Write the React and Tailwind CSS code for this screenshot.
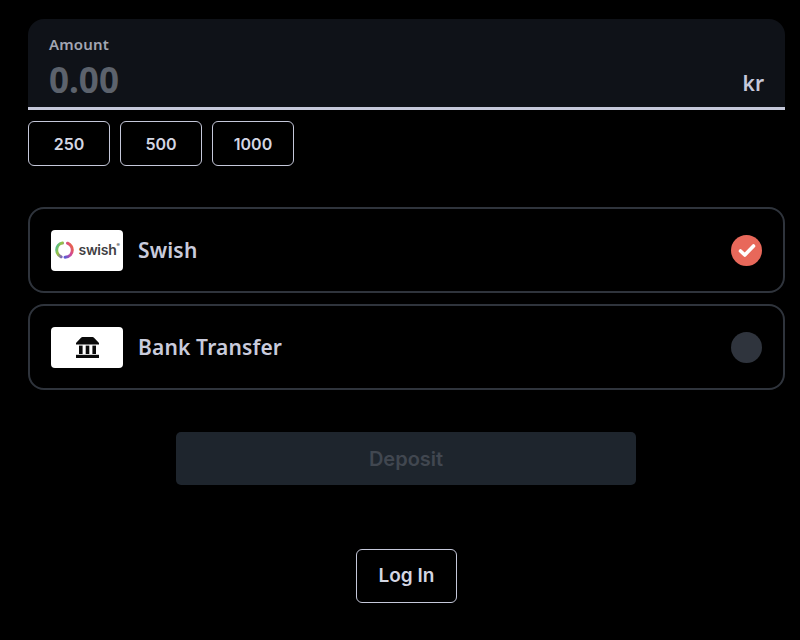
import React from "react";

const amounts = ["250", "500", "1000"];

function SwishLogo() {
  return (
    <div className="flex items-center gap-[5px]">
      <svg width="19" height="22" viewBox="0 0 19 22" fill="none">
        <defs>
          <linearGradient id="swishA" x1="0" y1="0" x2="1" y2="1">
            <stop offset="0" stopColor="#3fb8a0" />
            <stop offset="0.45" stopColor="#9ac43e" />
            <stop offset="1" stopColor="#7a55c8" />
          </linearGradient>
          <linearGradient id="swishB" x1="1" y1="0" x2="0" y2="1">
            <stop offset="0" stopColor="#ef6a35" />
            <stop offset="0.5" stopColor="#d0479a" />
            <stop offset="1" stopColor="#5b5bd6" />
          </linearGradient>
        </defs>
        <path d="M7.5 4C3.8 4.6 1.7 7.6 1.7 11c0 3 1.6 5.4 4.4 6.8" stroke="url(#swishA)" strokeWidth="3" strokeLinecap="round" />
        <path d="M12.5 4.2c2.9 1.4 4.8 3.8 4.8 6.8 0 3.9-3 7-7.3 7.2" stroke="url(#swishB)" strokeWidth="3" strokeLinecap="round" />
      </svg>
      <span className="font-['Inter',sans-serif] text-[14px] font-semibold leading-none text-[#3f4043] tracking-[-0.3px]">
        swish<sup className="text-[5px] align-super">®</sup>
      </span>
    </div>
  );
}

function BankIcon() {
  return (
    <svg width="23" height="21" viewBox="0 0 23 21" fill="#0a0a0a">
      <path d="M6.5 0h10a2 2 0 0 1 1.5.7L23 6v1.4H0V6L5 .7A2 2 0 0 1 6.5 0Z" />
      <rect x="3" y="8.6" width="3.6" height="8.4" />
      <rect x="9.7" y="8.6" width="3.6" height="8.4" />
      <rect x="16.4" y="8.6" width="3.6" height="8.4" />
      <rect x="0" y="17.8" width="23" height="3.2" />
    </svg>
  );
}

function MethodRow({ label, logo, selected }) {
  return (
    <div className="flex h-[86px] items-center rounded-[16px] border-2 border-[#2f343c] pl-[21px] pr-[21px]">
      <div className="flex h-[41px] w-[72px] items-center justify-center rounded-[4px] bg-white">{logo}</div>
      <span className="ml-[15px] mt-[1px] font-['Noto_Sans',sans-serif] text-[21px] font-semibold tracking-[0.15px] text-[#c9cbdc]">{label}</span>
      {selected ? (
        <div className="ml-auto flex h-[31px] w-[31px] items-center justify-center rounded-full bg-[#e8685a]">
          <svg width="18" height="15" viewBox="0 0 18 15" fill="none">
            <path d="M2.5 8 6.8 12 15.5 3" stroke="#fff" strokeWidth="3.6" strokeLinecap="round" strokeLinejoin="round" />
          </svg>
        </div>
      ) : (
        <div className="ml-auto h-[31px] w-[31px] rounded-full bg-[#2f343d]" />
      )}
    </div>
  );
}

export default function App() {
  return (
    <div className="flex h-[640px] w-[800px] flex-col overflow-hidden bg-black pl-[28px] pr-[15px] pt-[19px]">
      {/* Amount */}
      <div className="flex h-[91px] flex-col rounded-t-[16px] border-b-[3px] border-[#c5c8da] bg-[#0f1218] px-[21px] pt-[15px]">
        <span className="font-['Noto_Sans',sans-serif] text-[15px] font-semibold leading-[20px] tracking-[0.15px] text-[#a3a6b3]">Amount</span>
        <div className="mt-[7px] flex items-end justify-between">
          <span className="font-['Noto_Sans',sans-serif] text-[35px] font-bold leading-[38px] text-[#5c626c]">0.00</span>
          <span className="mb-[2px] font-['Noto_Sans',sans-serif] text-[21px] font-semibold leading-[28px] text-[#c5c8da]">kr</span>
        </div>
      </div>

      <div className="mt-[11px] flex gap-[10px]">
        {amounts.map((a) => (
          <button key={a} className="h-[45px] w-[82px] rounded-[6px] border-[1.5px] border-[#c5c8da] font-['Inter',sans-serif] text-[16px] font-semibold text-[#d4d6e3]">
            {a}
          </button>
        ))}
      </div>

      {/* Payment methods */}
      <div className="mt-[41px] flex flex-col gap-[11px]">
        <MethodRow label="Swish" logo={<SwishLogo />} selected />
        <MethodRow label="Bank Transfer" logo={<BankIcon />} />
      </div>

      <div className="mt-[42px] flex flex-col items-center">
        <button className="mr-[1px] h-[53px] w-[460px] rounded-[5px] bg-[#1e252d] pt-[1px] font-['Inter',sans-serif] text-[20px] font-semibold text-[#414750]">
          Deposit
        </button>
        <button className="mt-[64px] h-[54px] w-[101px] rounded-[6px] border-[1.5px] border-[#c5c8da] pt-[1px] font-['Inter',sans-serif] text-[19px] font-semibold text-[#d4d6e3]">
          Log In
        </button>
      </div>
    </div>
  );
}
